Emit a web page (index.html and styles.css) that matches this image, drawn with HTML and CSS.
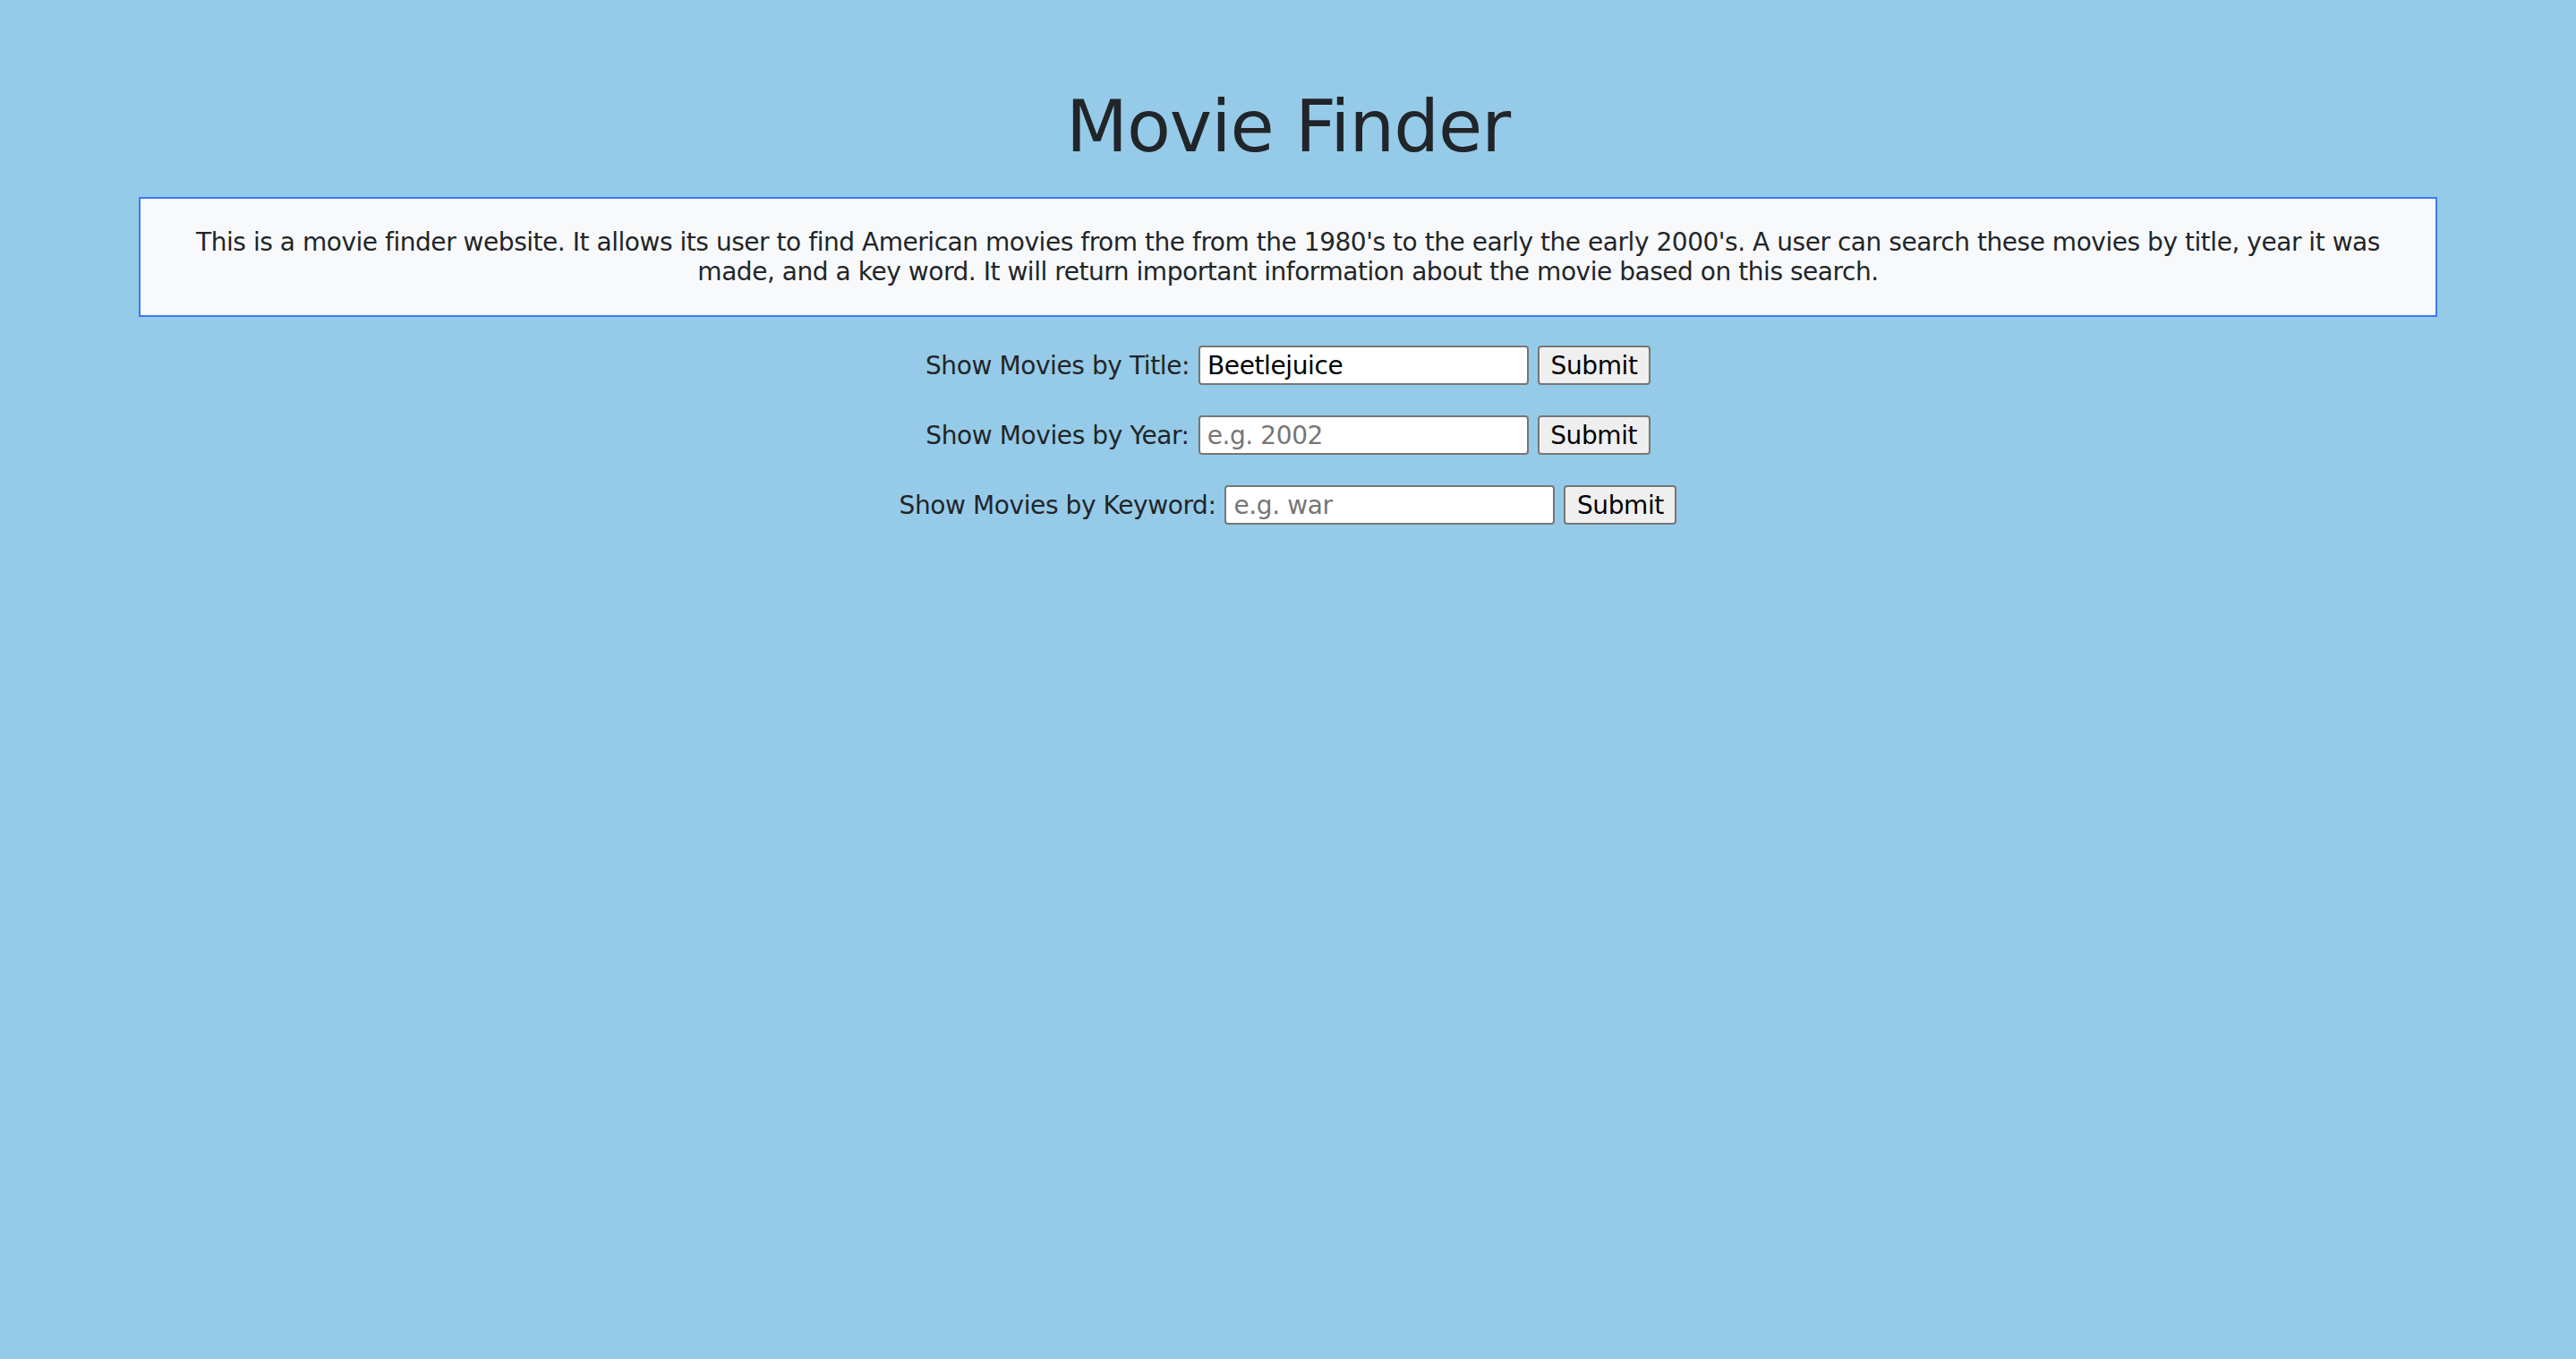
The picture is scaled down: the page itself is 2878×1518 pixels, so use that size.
FILE: index.html
```html
<!DOCTYPE html>
<html lang="en">
<head>
<meta charset="utf-8">
<title>Movie Finder</title>
<link rel="stylesheet" href="styles.css">
</head>
<body>
<div class="container">
  <h1 class="title">Movie Finder</h1>
  <div class="intro">
    This is a movie finder website. It allows its user to find American movies from the from the 1980's to the early the early 2000's. A user can search these movies by title, year it was made, and a key word. It will return important information about the movie based on this search.
  </div>
  <div class="forms">
    <form class="row">
      <label class="row-label" for="title">Show Movies by Title:</label>
      <input class="field" id="title" type="text" value="Beetlejuice">
      <button class="submit" type="button">Submit</button>
    </form>
    <form class="row">
      <label class="row-label" for="year">Show Movies by Year:</label>
      <input class="field" id="year" type="text" placeholder="e.g. 2002">
      <button class="submit" type="button">Submit</button>
    </form>
    <form class="row">
      <label class="row-label" for="keyword">Show Movies by Keyword:</label>
      <input class="field" id="keyword" type="text" placeholder="e.g. war">
      <button class="submit" type="button">Submit</button>
    </form>
  </div>
</div>
</body>
</html>
```

FILE: styles.css
```css
html, body {
  margin: 0;
  padding: 0;
}

body {
  background: #95cbe8;
  color: #212529;
  font-family: "DejaVu Sans", sans-serif;
  min-height: 1518px;
}

.container {
  max-width: 2568px;
  margin: 0 auto;
  padding-top: 94px;
}

.title {
  margin: 0 0 30px;
  font-size: 80px;
  font-weight: 400;
  line-height: 96px;
  letter-spacing: -1px;
  text-align: center;
  color: #212529;
}

.intro {
  border: 2px solid #3b79f6;
  background: #f8f9fa;
  padding: 32px 48px 32px;
  font-size: 28px;
  line-height: 33px;
  letter-spacing: -0.46px;
  text-align: center;
  color: #212529;
}

.forms {
  display: flex;
  flex-direction: column;
  gap: 34px;
  padding-top: 32px;
}

.row {
  display: flex;
  justify-content: center;
  align-items: center;
  gap: 10px;
  margin: 0;
}

.row-label {
  font-size: 28px;
  letter-spacing: -0.4px;
  color: #212529;
}

.field {
  box-sizing: border-box;
  width: 369px;
  height: 44px;
  border: 2px solid #767676;
  border-radius: 4px;
  padding: 0 8px;
  background: #ffffff;
  font-family: inherit;
  font-size: 28px;
  letter-spacing: -0.4px;
  color: #000000;
  outline: none;
}

.field::placeholder {
  color: #767676;
}

.submit {
  box-sizing: border-box;
  width: 126px;
  height: 44px;
  border: 2px solid #767676;
  border-radius: 4px;
  background: #efefef;
  font-family: inherit;
  font-size: 28px;
  letter-spacing: -0.4px;
  color: #000000;
  padding: 0;
}
```
